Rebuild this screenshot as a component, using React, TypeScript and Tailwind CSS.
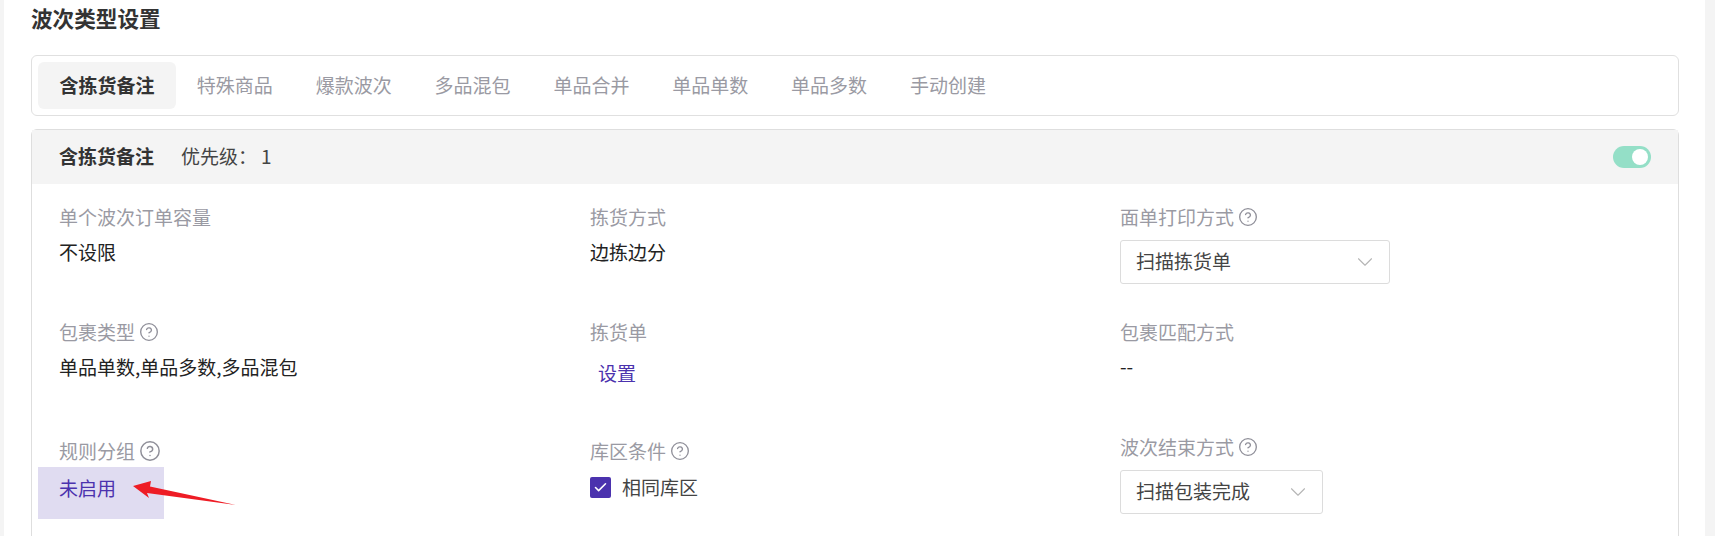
import { Check, ChevronDown, CircleHelp } from "lucide-react";
import type { ReactNode } from "react";

const tabs = ["含拣货备注", "特殊商品", "爆款波次", "多品混包", "单品合并", "单品单数", "单品多数", "手动创建"];

function Label({ text, help, big }: { text: string; help?: boolean; big?: boolean }) {
  return (
    <div className="flex h-[26px] items-center gap-[4px] text-[#9a9aa3]">
      <span>{text}</span>
      {help && <CircleHelp size={big ? 22 : 20} strokeWidth={1.6} className="text-[#8f8f99]" />}
    </div>
  );
}

function Select({ value, width }: { value: string; width: string }) {
  return (
    <div className={`mt-[10px] flex h-[44px] items-center justify-between rounded-[3px] border border-[#dcdcdc] pl-[15px] pr-[11px] text-[#444] ${width}`}>
      <span className="pb-[3px]">{value}</span>
      <ChevronDown size={26} strokeWidth={1} className="text-[#b5b5b5]" />
    </div>
  );
}

function Cell({ children, className = "" }: { children: ReactNode; className?: string }) {
  return <div className={`h-[115px] ${className}`}>{children}</div>;
}

export default function App() {
  return (
    <div
      className="h-[536px] overflow-hidden bg-[#f4f4f4] px-[4px] pr-[10px] text-[19px] leading-[26px] text-[#222]"
      style={{ fontFamily: '"Noto Sans CJK SC", "Noto Sans", sans-serif' }}
    >
      <div className="h-full bg-white pl-[27px] pr-[26px]">
        <h1 className="h-[55px] pt-[5px] text-[21.6px] leading-[26px] font-bold text-[#333]">波次类型设置</h1>

        <div className="flex h-[61px] items-center rounded-[6px] border border-[#e0e0e0] px-[6px]">
          {tabs.map((tab, i) => (
            <div
              key={tab}
              className={
                i === 0
                  ? "flex h-[47px] w-[138px] items-center justify-center rounded-[6px] bg-[#f4f4f4] pb-[2px] font-bold text-[#333]"
                  : "ml-[20.85px] w-[98px] pb-[2px] text-[#9a9aa3]"
              }
            >
              {tab}
            </div>
          ))}
        </div>

        <div className="mt-[13px] h-[500px] rounded-t-[6px] border border-[#dedede]">
          <div className="flex h-[54px] items-center justify-between bg-[#f4f4f4] pl-[27px] pr-[27px]">
            <div className="flex items-center pb-[3px]">
              <span className="font-bold text-[#333]">含拣货备注</span>
              <span className="ml-[27px] text-[#444]">优先级：</span>
              <span className="ml-[4px] text-[#444]">1</span>
            </div>
            <div className="flex h-[22px] w-[38px] items-center justify-end rounded-full bg-[#94dfc7] pr-[3px]">
              <div className="h-[16px] w-[16px] rounded-full bg-white" />
            </div>
          </div>

          <div className="grid grid-cols-[531px_530px_1fr] pl-[27px] pt-[20px]">
            <Cell>
              <Label text="单个波次订单容量" />
              <div className="mt-[9px]">不设限</div>
            </Cell>
            <Cell>
              <Label text="拣货方式" />
              <div className="mt-[9px]">边拣边分</div>
            </Cell>
            <Cell>
              <Label text="面单打印方式" help />
              <Select value="扫描拣货单" width="w-[270px]" />
            </Cell>

            <Cell>
              <Label text="包裹类型" help />
              <div className="mt-[9px]">单品单数,单品多数,多品混包</div>
            </Cell>
            <Cell>
              <Label text="拣货单" />
              <div className="mt-[15px] pl-[8px] text-[#4b32ae]">设置</div>
            </Cell>
            <Cell>
              <Label text="包裹匹配方式" />
              <div className="mt-[8px]">--</div>
            </Cell>

            <Cell className="pt-[4px]">
              <Label text="规则分组" help big />
              <div className="relative mt-[11px] text-[#4b32ae]">
                <div className="absolute left-[-21px] top-[-8px] h-[52px] w-[126px] bg-[#e0dcf1]" />
                <span className="relative">未启用</span>
                <svg className="absolute left-[65px] top-[-6px]" width="120" height="40" viewBox="0 0 120 40">
                  <path d="M9 17 L27 12 L26 17.5 L112 36 L23 24 L25 29 Z" fill="#ee1c25" />
                </svg>
              </div>
            </Cell>
            <Cell className="pt-[4px]">
              <Label text="库区条件" help />
              <div className="mt-[10px] flex items-center gap-[11px] text-[#444]">
                <span className="flex h-[21px] w-[21px] items-center justify-center rounded-[2px] bg-[#4b32ae]">
                  <Check size={15} strokeWidth={2.5} className="text-white" />
                </span>
                相同库区
              </div>
            </Cell>
            <Cell>
              <Label text="波次结束方式" help />
              <Select value="扫描包装完成" width="w-[203px]" />
            </Cell>
          </div>
        </div>
      </div>
    </div>
  );
}
